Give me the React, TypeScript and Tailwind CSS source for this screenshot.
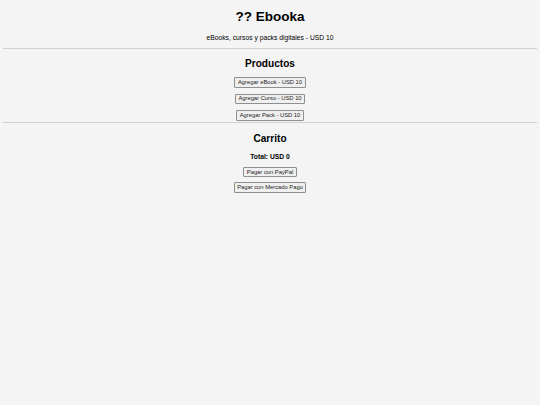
import React, { useState } from 'react';

const products = [
    { id: 'ebook', label: 'eBook', price: 10 },
    { id: 'curso', label: 'Curso', price: 10 },
    { id: 'pack', label: 'Pack', price: 10 },
];

const btn =
    'bg-[#efefef] border-[0.5px] border-[#8f8f8f] rounded-[1px] px-[2.5px] py-[0.75px] text-[5.8px] leading-[7px] text-[#222]';

export default function App() {
    const [total, setTotal] = useState(0);

    return (
        <div
            className="min-h-screen bg-[#f4f4f4] px-[3.4px] text-center text-black"
            style={{ fontFamily: '"Liberation Sans", Arial, sans-serif' }}
        >
            <h1 className="pt-[9px] text-[13.5px] leading-[15.6px] font-bold">?? Ebooka</h1>
            <p className="mt-[9px] text-[6.75px] leading-[7.8px]">eBooks, cursos y packs digitales - USD 10</p>
            <hr className="mt-[6.75px] border-t-[1px] border-[#d0d0d0]" />

            <section>
                <h2 className="mt-[9px] text-[10.1px] leading-[11.6px] font-bold">Productos</h2>
                <div className="mt-[7.5px] flex flex-col items-center gap-[6px]">
                    {products.map((p) => (
                        <button key={p.id} className={btn} onClick={() => setTotal(total + p.price)}>
                            Agregar {p.label} - USD {p.price}
                        </button>
                    ))}
                </div>
            </section>

            <hr className="mt-[1.75px] border-t-[1px] border-[#d0d0d0]" />

            <section>
                <h2 className="mt-[10px] text-[10.1px] leading-[11.6px] font-bold">Carrito</h2>
                <p className="mt-[8px] text-[6.75px] leading-[7.8px] font-bold">Total: USD {total}</p>
                <div className="mt-[6px] flex flex-col items-center gap-[5px]">
                    <button className={btn}>Pagar con PayPal</button>
                    <button className={btn}>Pagar con Mercado Pago</button>
                </div>
            </section>
        </div>
    );
}
